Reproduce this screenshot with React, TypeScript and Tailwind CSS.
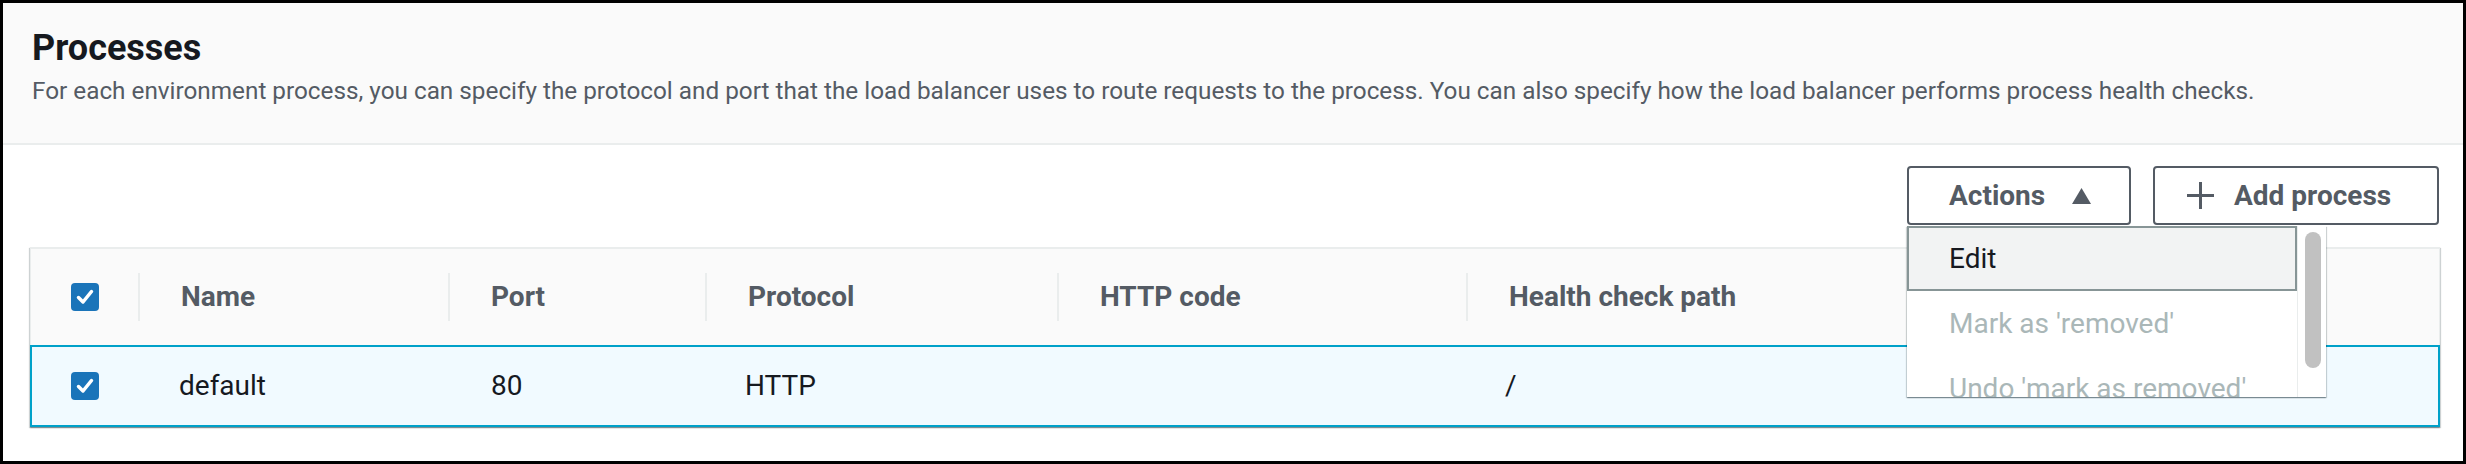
const font = "font-['Roboto','Liberation_Sans',sans-serif]";

type Process = {
  name: string;
  port: string;
  protocol: string;
  httpCode: string;
  healthPath: string;
};

const processes: Process[] = [
  { name: "default", port: "80", protocol: "HTTP", httpCode: "", healthPath: "/" },
];

const columns = ["Name", "Port", "Protocol", "HTTP code", "Health check path"];

function Checkbox() {
  return (
    <svg width="28" height="28" viewBox="0 0 28 28" className="block">
      <rect x="0" y="0" width="28" height="28" rx="4" fill="#1a74b9" />
      <polyline
        points="7.5,14.5 12,19 20.5,8.5"
        fill="none"
        stroke="#ffffff"
        strokeWidth="3.5"
        strokeLinecap="round"
        strokeLinejoin="round"
      />
    </svg>
  );
}

function ActionsMenu() {
  return (
    <div className="absolute left-0 top-full z-10 mt-px flex h-[171px] w-[419px] overflow-hidden bg-white shadow-[0_1px_1px_0_rgba(0,28,36,0.3),1px_1px_1px_0_rgba(0,28,36,0.15),-1px_1px_1px_0_rgba(0,28,36,0.15)]">
      <div className="flex w-[390px] flex-col">
        <div className="flex h-[65px] shrink-0 items-center border-2 border-[#879596] bg-[#f2f3f3] pl-[40px] text-[28px] text-[#16191f]">
          Edit
        </div>
        <div className="flex h-[65px] shrink-0 items-center pl-[42px] text-[28px] text-[#aab7b8]">
          Mark as 'removed'
        </div>
        <div className="flex h-[65px] shrink-0 items-center pl-[42px] text-[28px] text-[#aab7b8]">
          Undo 'mark as removed'
        </div>
      </div>
      <div className="flex-1 border-l border-[#eaeded] pl-[7px] pt-[6px]">
        <div className="h-[136px] w-[16px] rounded-full bg-[#c1c1c1]" />
      </div>
    </div>
  );
}

export default function App() {
  return (
    <div className={`${font} h-[464px] w-[2466px] overflow-hidden border-[3px] border-black bg-white`}>
      <div className="h-[142px] border-b-2 border-[#eaeded] bg-[#fafafa] pl-[29px] pt-[23px]">
        <h2 className="text-[36px] font-bold leading-[44px] text-[#16191f]">Processes</h2>
        <p className="mt-[6px] text-[24.3px] leading-[30px] text-[#545b64]">
          For each environment process, you can specify the protocol and port that the load balancer uses to route
          requests to the process. You can also specify how the load balancer performs process health checks.
        </p>
      </div>

      <div className="pl-[27px] pr-[23px]">
        <div className="mt-[21px] flex justify-end gap-[22px] pr-px">
          <div className="relative">
            <button className="flex h-[59px] w-[224px] items-center rounded-[4px] border-2 border-[#545b64] bg-white pl-[40px] text-[28px] font-bold text-[#545b64]">
              Actions
              <svg width="19" height="16" viewBox="0 0 19 16" className="ml-[27px]">
                <polygon points="9.5,0 19,16 0,16" fill="#545b64" />
              </svg>
            </button>
            <ActionsMenu />
          </div>
          <button className="flex h-[59px] w-[286px] items-center rounded-[4px] border-2 border-[#545b64] bg-white pl-[31px] text-[28px] font-bold text-[#545b64]">
            <svg width="29" height="29" viewBox="0 0 29 29" className="mr-[19px]">
              <path d="M14.5 1v27M1 14.5h27" stroke="#545b64" strokeWidth="3" fill="none" />
            </svg>
            Add process
          </button>
        </div>

        <div className="mt-[22px] shadow-[0_1px_1px_0_rgba(0,28,36,0.3),1px_1px_1px_0_rgba(0,28,36,0.15),-1px_1px_1px_0_rgba(0,28,36,0.15)]">
          <div className="grid h-[98px] grid-cols-[107px_310px_257px_352px_409px_1fr] items-center border-x border-t-2 border-[#eaeded] bg-[#fafafa] text-[28px] font-bold text-[#545b64]">
            <div className="flex justify-center">
              <Checkbox />
            </div>
            {columns.map((col) => (
              <div key={col} className="flex items-center">
                <div className="h-[48px] w-[2px] bg-[#eaeded]" />
                <span className="pl-[41px]">{col}</span>
              </div>
            ))}
          </div>

          {processes.map((p) => (
            <div
              key={p.name}
              className="grid h-[82px] grid-cols-[106px_310px_257px_352px_409px_1fr] items-center border-2 border-[#00a1c9] bg-[#f1faff] text-[28px] text-[#16191f]"
            >
              <div className="flex justify-center">
                <Checkbox />
              </div>
              <div className="pl-[41px]">{p.name}</div>
              <div className="pl-[43px]">{p.port}</div>
              <div className="pl-[40px]">{p.protocol}</div>
              <div className="pl-[40px]">{p.httpCode}</div>
              <div className="pl-[39px]">{p.healthPath}</div>
            </div>
          ))}
        </div>
      </div>
    </div>
  );
}
